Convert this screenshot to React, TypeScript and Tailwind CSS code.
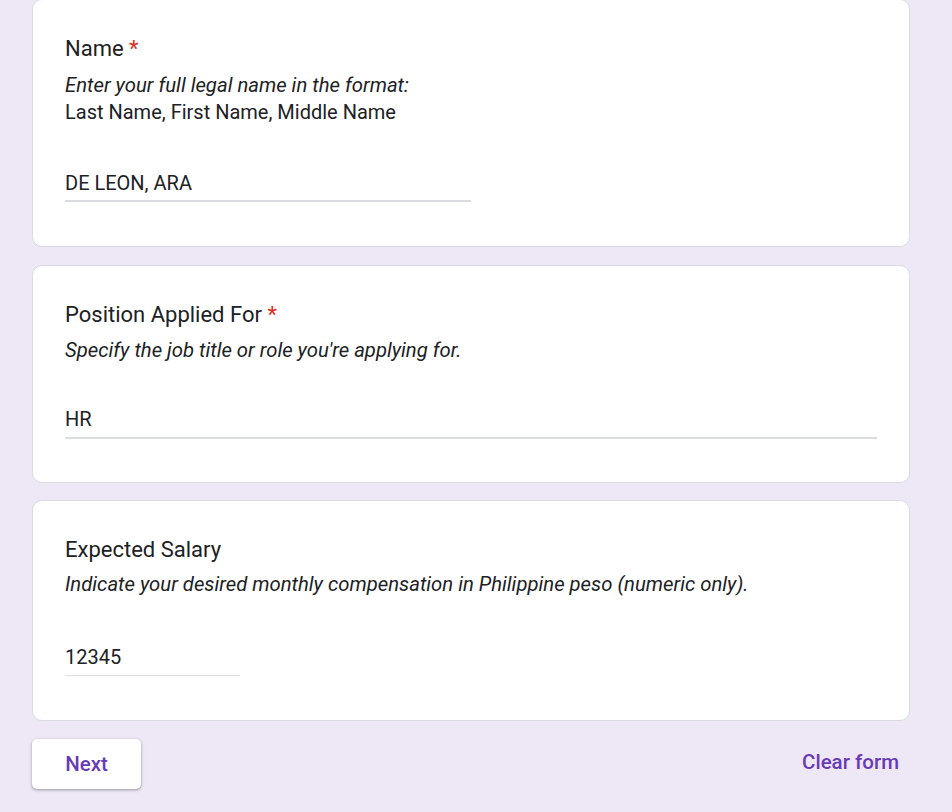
import React from "react";

const font = { fontFamily: "Roboto, 'Liberation Sans', Arial, sans-serif" };

function Title({ text, required }: { text: string; required?: boolean }) {
  return (
    <div className="text-[22px] leading-[32px] text-[#202124]">
      {text}
      {required && <span className="text-[#d93025]"> *</span>}
    </div>
  );
}

const cardCls =
  "bg-white border border-[#dadce0] rounded-[10px] px-[32px] pt-[33px]";

export default function App() {
  return (
    <div
      className="min-h-[812px] w-[952px] bg-[#ede7f6] overflow-hidden"
      style={font}
    >
      <div className="w-[878px] ml-[32px] -mt-[1px] flex flex-col gap-[18px]">
        <div className={cardCls + " pb-[44px]"}>
          <Title text="Name" required />
          <div className="mt-[7px] text-[20px] leading-[27px] text-[#202124]">
            <div className="italic text-[20.3px]">Enter your full legal name in the format:</div>
            <div>Last Name, First Name, Middle Name</div>
          </div>
          <div className="mt-[44px] w-[406px] border-b-2 border-[#dadce0] pb-[3px]">
            <div className="text-[20px] leading-[27px] text-[#202124]">
              DE LEON, ARA
            </div>
          </div>
        </div>

        <div className={cardCls + " pb-[43px]"}>
          <Title text="Position Applied For" required />
          <div className="mt-[6px] text-[20.3px] leading-[27px] text-[#202124] italic">
            Specify the job title or role you're applying for.
          </div>
          <div className="mt-[42px] w-full border-b-2 border-[#dadce0] pb-[4px]">
            <div className="text-[20px] leading-[27px] text-[#202124]">HR</div>
          </div>
        </div>

        <div className={cardCls + " -mt-[1px] pb-[44px]"}>
          <Title text="Expected Salary" />
          <div className="mt-[5px] text-[20.3px] leading-[27px] text-[#202124] italic">
            Indicate your desired monthly compensation in Philippine peso (numeric only).
          </div>
          <div className="mt-[46px] w-[175px] border-b border-[#e0e0e0] pb-[4px]">
            <div className="text-[20px] leading-[27px] text-[#202124]">12345</div>
          </div>
        </div>

        <div className="flex items-center justify-between">
          <button className="w-[109px] h-[50px] bg-white rounded-[5px] shadow-[0_1px_2px_0_rgba(60,64,67,0.3),0_1px_3px_1px_rgba(60,64,67,0.15)] text-[#673ab7] text-[20.5px] font-medium">
            Next
          </button>
          <button className="mr-[11px] -mt-[3px] text-[#673ab7] text-[20.5px] font-medium">
            Clear form
          </button>
        </div>
      </div>
    </div>
  );
}
